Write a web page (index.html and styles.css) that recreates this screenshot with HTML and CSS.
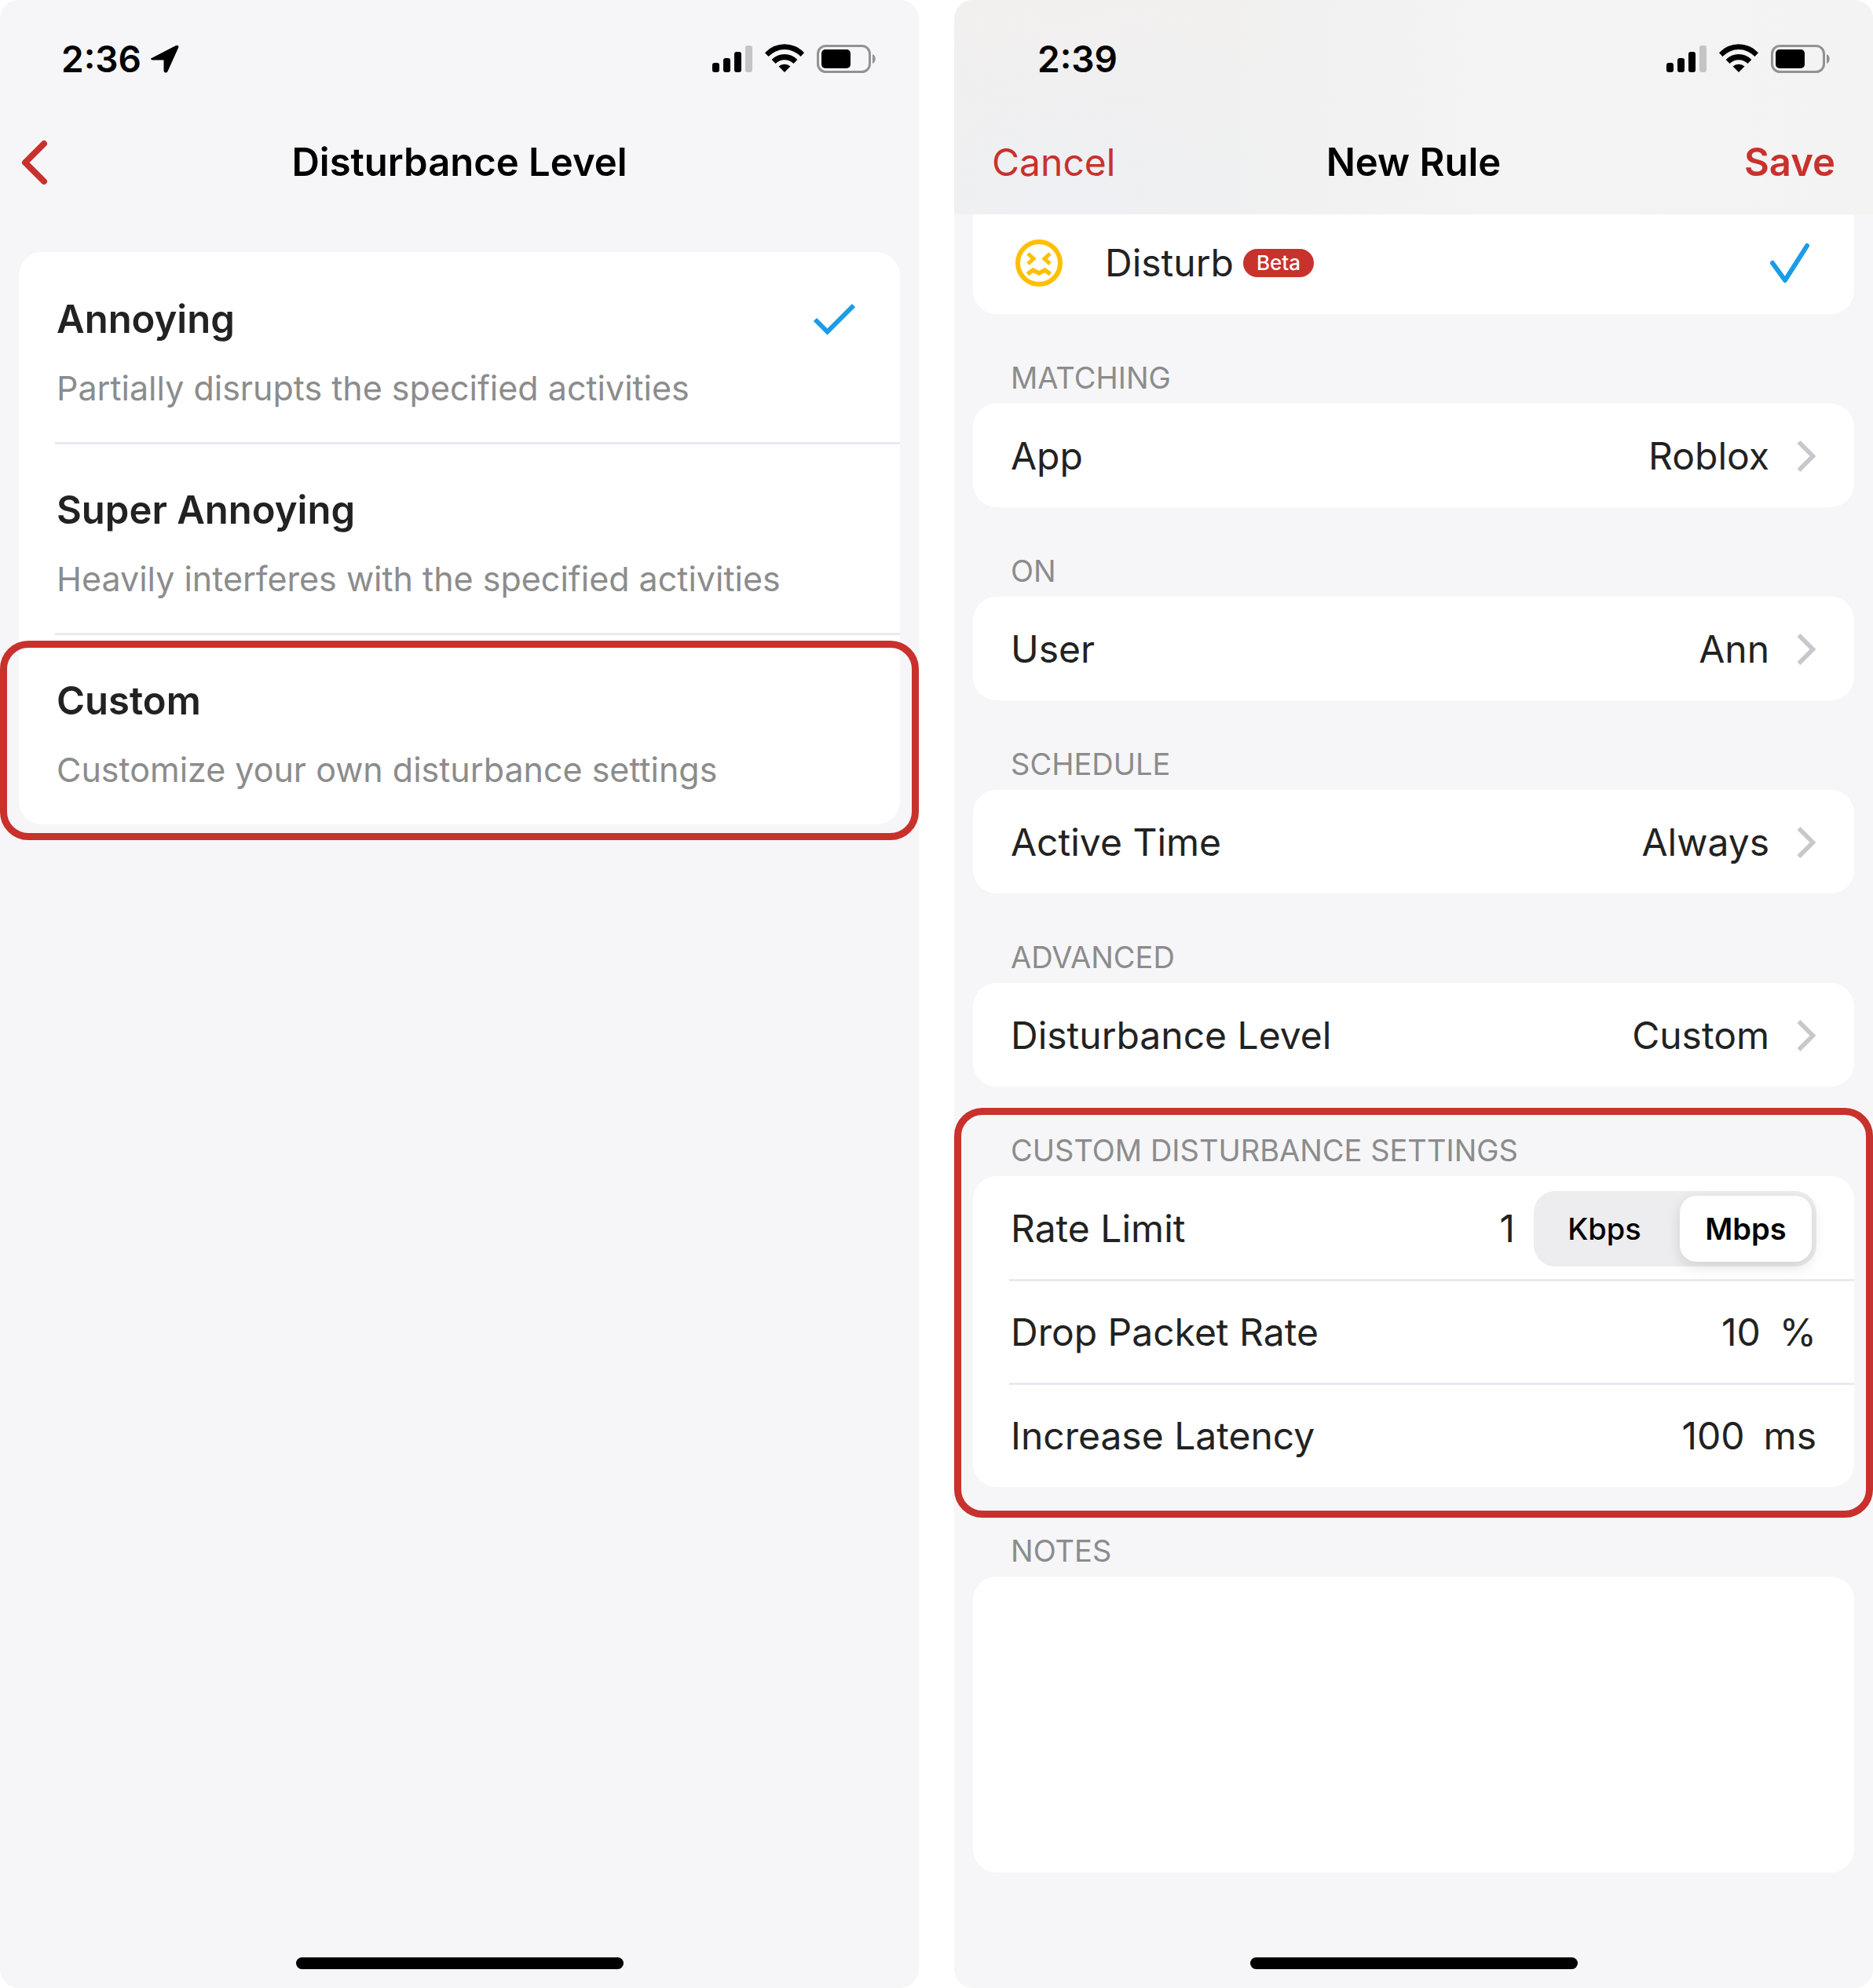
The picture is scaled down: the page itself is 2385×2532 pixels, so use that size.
FILE: index.html
```html
<!DOCTYPE html>
<html lang="en">
<head>
    <meta charset="UTF-8">
    <meta name="viewport" content="width=device-width, initial-scale=1.0">
    <title>Disturbance Level</title>
    <link rel="stylesheet" href="styles.css">
</head>
<body>
    <!-- shared icons -->
    <svg class="sprite" aria-hidden="true">
        <symbol id="status-icons" viewBox="0 0 208 38">
            <rect x="0" y="24" width="9" height="12" rx="3"/>
            <rect x="14" y="18" width="9" height="18" rx="3"/>
            <rect x="28" y="10" width="9" height="26" rx="3"/>
            <rect x="42" y="2" width="9" height="34" rx="3" fill="#c4c4c6"/>
            <path d="M67 11.200 A34 34 0 0 1 117 11.200 L112.500 16 A28 28 0 0 0 71.500 16 Z"/>
            <path d="M75.700 20 A22.500 22.500 0 0 1 108.300 20 L103.500 25 A16.500 16.500 0 0 0 80.500 25 Z"/>
            <path d="M84.500 28.600 A11 11 0 0 1 99.500 28.600 L92 36 Z"/>
            <rect x="134.500" y="2.500" width="66" height="33" rx="10" fill="none" stroke="#929294" stroke-width="3"/>
            <rect x="139" y="7" width="37" height="24" rx="5"/>
            <path d="M204 13 C209 15 209 23 204 25 Z" fill="#929294"/>
        </symbol>
        <symbol id="chevron" viewBox="0 0 26 42">
            <path d="M3.500 3 L21.500 21 L3.500 39" fill="none" stroke="#c7c7cc" stroke-width="5.500"/>
        </symbol>
    </svg>

    <main class="screens">
        <section class="screen">
            <header class="top">
                <div class="status">
                    <div class="clock">
                        <span>2:36</span>
                        <svg class="location" viewBox="0 0 36 36"><path d="M3 16 L32 1 Q36.500 -0.500 35 4 L21.500 34 Q20 36.500 17.500 35 Q16.500 34 16.500 32.500 V19.500 H3.500 Q0 19.500 0 17.500 Q0.500 17 3 16 Z"/></svg>
                    </div>
                    <svg class="status-icons" role="img" aria-label="Signal, Wi-Fi, battery"><use href="#status-icons"/></svg>
                </div>
                <nav class="navbar">
                    <button type="button" class="nav-button back" aria-label="Back">
                        <svg viewBox="0 0 34 58"><path d="M29 5 L5 29 L29 53" fill="none" stroke="currentColor" stroke-width="8" stroke-linecap="round" stroke-linejoin="round"/></svg>
                    </button>
                    <h1>Disturbance Level</h1>
                </nav>
            </header>

            <form class="card levels">
                <label class="level">
                    <input class="hidden-input" type="radio" name="level" value="annoying" checked>
                    <span class="level-name">Annoying</span>
                    <svg class="level-check" viewBox="0 0 54 42"><path d="M3 21 L18.500 36.500 L52 3" fill="none" stroke="#1b9ce8" stroke-width="6"/></svg>
                    <span class="level-text">Partially disrupts the specified activities</span>
                </label>
                <label class="level">
                    <input class="hidden-input" type="radio" name="level" value="super">
                    <span class="level-name">Super Annoying</span>
                    <span class="level-text">Heavily interferes with the specified activities</span>
                </label>
                <label class="level level-marked">
                    <input class="hidden-input" type="radio" name="level" value="custom">
                    <span class="level-name">Custom</span>
                    <span class="level-text">Customize your own disturbance settings</span>
                </label>
            </form>

            <div class="home-bar"></div>
        </section>

        <section class="screen">
            <header class="top top-blurred">
                <div class="status status-inset">
                    <div class="clock"><span>2:39</span></div>
                    <svg class="status-icons" role="img" aria-label="Signal, Wi-Fi, battery"><use href="#status-icons"/></svg>
                </div>
                <nav class="navbar">
                    <button type="button" class="nav-button">Cancel</button>
                    <h1>New Rule</h1>
                    <button type="submit" form="rule" class="nav-button save">Save</button>
                </nav>
            </header>

            <form class="rule" id="rule">
                <div class="card card-scrolled">
                    <label class="row action">
                        <input class="hidden-input" type="radio" name="action" value="disturb" checked>
                        <svg class="face" viewBox="0 0 60 60" fill="none" stroke="#ffbf00">
                            <circle cx="30" cy="30" r="27" stroke-width="6"/>
                            <path d="M16 18 L23 24.500 L16 31 M44 18 L37 24.500 L44 31" stroke-width="5"/>
                            <path d="M15.500 44 L22.500 39 L30 43 L37.500 39 L44.500 44" stroke-width="5.500"/>
                        </svg>
                        <span>Disturb</span>
                        <span class="badge">Beta</span>
                        <svg class="action-check" viewBox="0 0 52 52"><path d="M4 26 L20 48 L48 4" fill="none" stroke="#1b9ce8" stroke-width="6" stroke-linecap="round" stroke-linejoin="round"/></svg>
                    </label>
                </div>

                <section class="group">
                    <h2>MATCHING</h2>
                    <div class="card">
                        <button type="button" class="row">
                            <span>App</span>
                            <span class="value">Roblox</span>
                            <svg class="chevron"><use href="#chevron"/></svg>
                        </button>
                    </div>
                </section>

                <section class="group">
                    <h2>ON</h2>
                    <div class="card">
                        <button type="button" class="row">
                            <span>User</span>
                            <span class="value">Ann</span>
                            <svg class="chevron"><use href="#chevron"/></svg>
                        </button>
                    </div>
                </section>

                <section class="group">
                    <h2>SCHEDULE</h2>
                    <div class="card">
                        <button type="button" class="row">
                            <span>Active Time</span>
                            <span class="value">Always</span>
                            <svg class="chevron"><use href="#chevron"/></svg>
                        </button>
                    </div>
                </section>

                <section class="group">
                    <h2>ADVANCED</h2>
                    <div class="card">
                        <button type="button" class="row">
                            <span>Disturbance Level</span>
                            <span class="value">Custom</span>
                            <svg class="chevron"><use href="#chevron"/></svg>
                        </button>
                    </div>
                </section>

                <section class="group group-marked">
                    <h2>CUSTOM DISTURBANCE SETTINGS</h2>
                    <div class="card">
                        <div class="row">
                            <label for="rate">Rate Limit</label>
                            <input class="number" id="rate" type="text" inputmode="numeric" value="1">
                            <div class="segments">
                                <label class="segment">
                                    <input class="hidden-input" type="radio" name="unit" value="kbps">
                                    <span>Kbps</span>
                                </label>
                                <label class="segment">
                                    <input class="hidden-input" type="radio" name="unit" value="mbps" checked>
                                    <span>Mbps</span>
                                </label>
                            </div>
                        </div>
                        <div class="row">
                            <label for="drop">Drop Packet Rate</label>
                            <input class="number" id="drop" type="text" inputmode="numeric" value="10">
                            <span class="unit">%</span>
                        </div>
                        <div class="row">
                            <label for="latency">Increase Latency</label>
                            <input class="number" id="latency" type="text" inputmode="numeric" value="100">
                            <span class="unit">ms</span>
                        </div>
                    </div>
                </section>

                <section class="group">
                    <h2><label for="notes">NOTES</label></h2>
                    <textarea class="card notes" id="notes"></textarea>
                </section>
            </form>

            <div class="home-bar"></div>
        </section>
    </main>
</body>
</html>
```
FILE: styles.css
```css
* {
    margin: 0;
    padding: 0;
    box-sizing: border-box;
}

body {
    background-color: #fff;
    color: #222;
    font-family: Inter, "Liberation Sans", sans-serif;
    font-size: 48px;
    line-height: 60px;
}

button,
input,
textarea {
    border: none;
    background: none;
    color: inherit;
    font: inherit;
}

button,
label {
    cursor: pointer;
}

svg {
    flex: none;
}

.sprite {
    display: none;
}

.hidden-input {
    position: absolute;
    opacity: 0;
}

.screens {
    display: grid;
    grid-template-columns: 1fr 1fr;
    gap: 45px;
    min-height: 100vh;
}

.screen {
    display: flex;
    flex-direction: column;
    background-color: #f6f6f8;
    border-radius: 24px;
    overflow: hidden;
}

/* status bar and title */
.top {
    position: relative;
    z-index: 1;
    color: #000;
}

.top-blurred {
    background:
        radial-gradient(circle at 12% 100%, #eef0f3, transparent 30%),
        radial-gradient(circle at 12% 0%, #f3f0ee, transparent 30%),
        linear-gradient(90deg, #f0efef, #f0f0f0 30%, #f4f4f4 60%, #f3f3f4);
}

.status {
    display: flex;
    align-items: center;
    justify-content: space-between;
    height: 141px;
    padding: 8px 55px 0 78px;
}

.status-inset {
    padding-left: 106px;
}

.clock {
    display: flex;
    align-items: center;
    gap: 12px;
    font-size: 46px;
    font-weight: 600;
}

.location {
    width: 36px;
    height: 36px;
}

.status-icons {
    width: 208px;
    height: 38px;
}

.navbar {
    display: grid;
    grid-template-columns: 1fr auto 1fr;
    align-items: center;
    height: 132px;
    padding: 0 48px;
}

.navbar h1 {
    grid-column: 2;
    font-size: 49px;
    font-weight: 600;
}

.nav-button {
    justify-self: start;
    color: #c9312c;
}

.save {
    justify-self: end;
    font-size: 49px;
    font-weight: 600;
}

.back {
    display: flex;
    margin-left: -21px;
}

.back svg {
    width: 34px;
    height: 58px;
}

.card {
    background-color: #fff;
    border-radius: 30px;
}

/* disturbance level list */
.levels {
    margin: 48px 24px;
}

.level {
    position: relative;
    display: grid;
    grid-template-columns: 1fr auto;
    align-content: center;
    align-items: center;
    row-gap: 27px;
    height: 243px;
    padding: 15px 57px 0 48px;
}

.level-name {
    font-size: 49px;
    font-weight: 600;
}

.level-check {
    width: 54px;
    height: 42px;
}

.level-text {
    grid-column: 1 / -1;
    color: #8c8c8c;
    font-size: 43px;
}

/* hairline between list rows */
.level + .level::before,
.row + .row::before {
    content: "";
    position: absolute;
    top: -1px;
    right: 0;
    left: 46px;
    height: 3px;
    background-color: #e8eaf1;
}

/* red frames that point at a setting */
.level-marked::after,
.group-marked::after {
    content: "";
    position: absolute;
    right: -24px;
    left: -24px;
    border: 9px solid #c9312c;
    border-radius: 36px;
    pointer-events: none;
}

.level-marked::after {
    top: 9px;
    bottom: -20px;
}

.group-marked::after {
    top: 27px;
    bottom: -39px;
}

/* rule form */
.rule {
    padding: 0 24px;
}

/* top of this card is under the title bar */
.card-scrolled {
    margin-top: -5px;
    border-top-left-radius: 0;
    border-top-right-radius: 0;
}

.row {
    position: relative;
    display: flex;
    align-items: center;
    width: 100%;
    height: 132px;
    padding: 2px 48px 0;
    text-align: left;
}

.face {
    width: 60px;
    height: 60px;
    margin-left: 6px;
    margin-right: 54px;
}

.badge {
    margin-left: 12px;
    padding: 0 17px;
    border-radius: 18px;
    background-color: #c9312c;
    color: #fff;
    font-size: 26px;
    font-weight: 500;
    line-height: 36px;
}

.action-check {
    width: 52px;
    height: 52px;
    margin-left: auto;
    margin-right: 8px;
}

.group {
    position: relative;
}

.group h2 {
    height: 114px;
    padding: 54px 48px 0;
    color: #8c8c8c;
    font-size: 38px;
    font-weight: 400;
    line-height: 54px;
}

.value {
    margin-left: auto;
}

.chevron {
    width: 26px;
    height: 42px;
    margin-left: 34px;
}

.number {
    flex: 1;
    min-width: 0;
    text-align: right;
}

.unit {
    margin-left: 24px;
}

.segments {
    display: flex;
    width: 360px;
    height: 96px;
    margin-left: 24px;
    padding: 6px;
    gap: 12px;
    border-radius: 27px;
    background-color: #ededef;
}

.segment {
    flex: 1;
    border-radius: 21px;
    color: #000;
    font-size: 38px;
    font-weight: 500;
    line-height: 84px;
    text-align: center;
}

.segment:has(:checked) {
    background-color: #fff;
    box-shadow: 0 6px 18px rgba(0, 0, 0, 0.12);
    font-weight: 600;
}

.notes {
    display: block;
    width: 100%;
    height: 377px;
    padding: 36px 48px;
    resize: none;
}

.home-bar {
    align-self: center;
    width: 417px;
    height: 15px;
    margin-top: auto;
    margin-bottom: 24px;
    border-radius: 8px;
    background-color: #000;
}
```
